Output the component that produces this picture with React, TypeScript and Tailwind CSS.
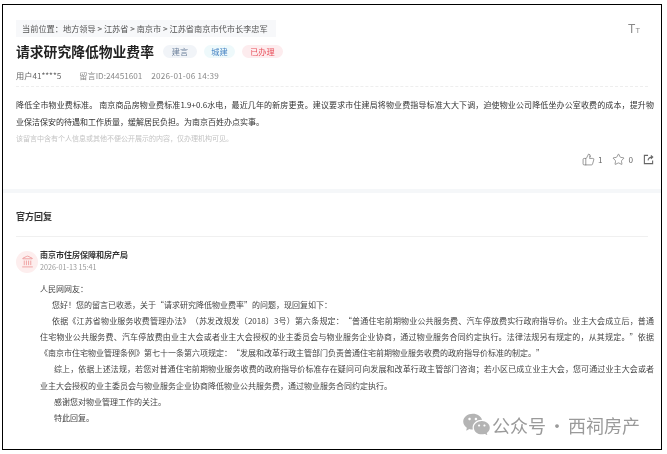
import { Landmark, Star, ThumbsUp } from "lucide-react";
import { RiWechatFill } from "react-icons/ri";

const font = "font-['Noto_Sans_CJK_SC','Liberation_Sans',sans-serif]";
const fullLine = "text-justify [text-align-last:justify]";

const replyLines = [
  { text: "人民网网友：", className: "" },
  { text: "您好！您的留言已收悉，关于“请求研究降低物业费率”的问题，现回复如下：", className: "pl-[12px]" },
  { text: "依据《江苏省物业服务收费管理办法》（苏发改规发〔2018〕3号）第六条规定：“普通住宅前期物业公共服务费、汽车停放费实行政府指导价。业主大会成立后，普通", className: `pl-[12px] ${fullLine}` },
  { text: "住宅物业公共服务费、汽车停放费由业主大会或者业主大会授权的业主委员会与物业服务企业协商，通过物业服务合同约定执行。法律法规另有规定的，从其规定。”依据", className: fullLine },
  { text: "《南京市住宅物业管理条例》第七十一条第六项规定：“发展和改革行政主管部门负责普通住宅前期物业服务收费的政府指导价标准的制定。”", className: "" },
  { text: "综上，依据上述法规，若您对普通住宅前期物业服务收费的政府指导价标准存在疑问可向发展和改革行政主管部门咨询；若小区已成立业主大会，您可通过业主大会或者", className: `pl-[14px] ${fullLine}` },
  { text: "业主大会授权的业主委员会与物业服务企业协商降低物业公共服务费，通过物业服务合同约定执行。", className: "" },
  { text: "感谢您对物业管理工作的关注。", className: "pl-[14px]" },
  { text: "特此回复。", className: "pl-[14px]" },
];

export default function App() {
  return (
    <div className={`w-[667px] h-[454px] overflow-hidden bg-white pt-1 pl-0.5 [text-spacing-trim:space-all] ${font}`}>
      <div className="relative w-[660px] h-[446px] border border-black bg-white overflow-hidden">
        <div className="h-full blur-[0.3px]">
          {/* 留言 */}
          <div className="h-[184px] pl-[13px] pr-[7px] pt-[15px]">
            <div className="flex items-start justify-between">
              <div className="h-[17px] w-[260px] bg-[#f7f8fa] px-[6px] text-[8.2px] leading-[17px] text-[#555] whitespace-nowrap">
                当前位置：地方领导 &gt; 江苏省 &gt; 南京市 &gt; 江苏省南京市代市长李忠军
              </div>
              <div className="mr-[14px] mt-[3px] flex items-baseline font-['Liberation_Sans',sans-serif] text-[#888]">
                <span className="text-[12px] leading-none">T</span>
                <span className="text-[7.5px] leading-none">T</span>
              </div>
            </div>
            <div className="mt-[3px] flex items-center">
              <h1 className="text-[13.8px] leading-[22px] font-bold text-[#222]">请求研究降低物业费率</h1>
              <span className="ml-[9px] h-[13px] w-[34px] rounded-full bg-[#f1f4f8] text-center text-[8.2px] leading-[13px] text-[#6b7f99]">建言</span>
              <span className="ml-[7px] h-[13px] w-[31px] rounded-full bg-[#eef9fb] text-center text-[8.2px] leading-[13px] text-[#4a86c5]">城建</span>
              <span className="ml-[7px] h-[13px] w-[41px] rounded-full bg-[#fdecee] text-center text-[8.2px] leading-[13px] text-[#e8505b]">已办理</span>
            </div>
            <div className="mt-[6px] flex text-[8.2px] leading-[14px] text-[#8a8a8a]">
              <span className="text-[#666]">用户41****5</span>
              <span className="ml-[18px]">留言ID:24451601</span>
              <span className="ml-[9px] tracking-[0.2px]">2026-01-06 14:39</span>
            </div>
            <div className="mr-[6px] mt-[4px] border-t border-dashed border-[#eeeeee]" />
            <div className="mt-[10px] w-[638px] text-[8px] leading-[16.7px] text-[#333] whitespace-nowrap">
              <p className={fullLine}>降低全市物业费标准。 南京商品房物业费标准1.9+0.6水电，最近几年的新房更贵。建议要求市住建局将物业费指导标准大大下调，迫使物业公司降低坐办公室收费的成本，提升物</p>
              <p>业保洁保安的待遇和工作质量，缓解居民负担。为南京百姓办点实事。</p>
              <p className="text-[7px] text-[#c4c4c4]">该留言中含有个人信息或其他不便公开展示的内容，仅办理机构可见。</p>
            </div>
            <div className="mt-[6px] flex items-center justify-end gap-[10px] text-[8.2px] text-[#666]">
              <span className="flex items-center gap-[3px]"><ThumbsUp size={13} strokeWidth={1.2} />1</span>
              <span className="flex items-center gap-[3px]"><Star size={13} strokeWidth={1.2} />0</span>
              <svg width="11" height="11" viewBox="0 0 12 12" fill="none" stroke="currentColor" strokeWidth="1.2">
                <path d="M5.5 1.5H1.5v9h9V7" />
                <path d="M5.5 7c.3-2.4 1.8-3.6 4.5-3.6M8.6 1.6 10.6 3.4 8.6 5.2" />
              </svg>
            </div>
          </div>
          <div className="h-[4px] bg-[#f5f7f9]" />

          {/* 官方回复 */}
          <div className="px-[13px]">
            <h2 className="mt-[17px] text-[9px] leading-[14px] font-bold text-[#333]">官方回复</h2>
            <div className="mt-[12px] border-t border-[#f0f0f0]" />
            <div className="mt-[13px] flex items-center">
              <div className="flex h-[22px] w-[22px] items-center justify-center rounded-full bg-[#fdeeee] text-[#e98585]">
                <Landmark size={13} strokeWidth={1.3} />
              </div>
              <div className="ml-[2px] -mt-[1px]">
                <div className="text-[8px] leading-[11px] font-bold text-[#333]">南京市住房保障和房产局</div>
                <div className="mt-[1px] text-[7.2px] leading-[12px] text-[#999]">2026-01-13 15:41</div>
              </div>
            </div>
            <div className="mt-[8px] ml-[24px] w-[614px] text-[8px] leading-[16.1px] text-[#444] whitespace-nowrap">
              {replyLines.map((line) => (
                <p key={line.text} className={line.className}>{line.text}</p>
              ))}
            </div>
          </div>

          {/* 水印 */}
          <div className="absolute left-[459px] top-[405px] flex items-center text-[#9a9a9a]">
            <RiWechatFill size={29} className="text-[#b4b4b4]" />
            <span className="ml-[1px] text-[18px] leading-[24px] [word-spacing:-2px] whitespace-nowrap">公众号 · 西祠房产</span>
          </div>
        </div>
      </div>
    </div>
  );
}
